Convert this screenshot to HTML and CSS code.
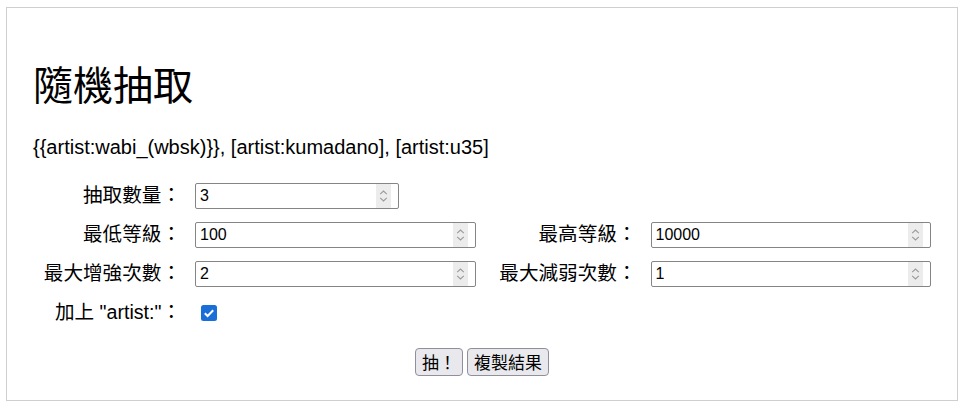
FILE: index.html
```html
<!DOCTYPE html>
<html lang="zh-Hant">
<head>
<meta charset="utf-8">
<title>隨機抽取</title>
<link rel="stylesheet" href="styles.css">
</head>
<body>
<main class="panel">
  <h1 class="title">隨機抽取</h1>
  <p class="result">{{artist:wabi_(wbsk)}}, [artist:kumadano], [artist:u35]</p>
  <form class="form">
    <label class="label">抽取數量：</label>
    <div class="cell"><div class="field field-short"><input class="num" type="text" value="3"><span class="spin"><svg width="9" height="14" viewBox="0 0 9 14"><path d="M1.2 5.2 L4.5 2 L7.8 5.2 M1.2 8.8 L4.5 12 L7.8 8.8" fill="none" stroke="#9a9a9a" stroke-width="1.1"/></svg></span></div></div>
    <span class="blank"></span><span class="blank"></span>

    <label class="label">最低等級：</label>
    <div class="cell"><div class="field"><input class="num" type="text" value="100"><span class="spin"><svg width="9" height="14" viewBox="0 0 9 14"><path d="M1.2 5.2 L4.5 2 L7.8 5.2 M1.2 8.8 L4.5 12 L7.8 8.8" fill="none" stroke="#9a9a9a" stroke-width="1.1"/></svg></span></div></div>
    <label class="label">最高等級：</label>
    <div class="cell"><div class="field"><input class="num" type="text" value="10000"><span class="spin"><svg width="9" height="14" viewBox="0 0 9 14"><path d="M1.2 5.2 L4.5 2 L7.8 5.2 M1.2 8.8 L4.5 12 L7.8 8.8" fill="none" stroke="#9a9a9a" stroke-width="1.1"/></svg></span></div></div>

    <label class="label">最大增強次數：</label>
    <div class="cell"><div class="field"><input class="num" type="text" value="2"><span class="spin"><svg width="9" height="14" viewBox="0 0 9 14"><path d="M1.2 5.2 L4.5 2 L7.8 5.2 M1.2 8.8 L4.5 12 L7.8 8.8" fill="none" stroke="#9a9a9a" stroke-width="1.1"/></svg></span></div></div>
    <label class="label">最大減弱次數：</label>
    <div class="cell"><div class="field"><input class="num" type="text" value="1"><span class="spin"><svg width="9" height="14" viewBox="0 0 9 14"><path d="M1.2 5.2 L4.5 2 L7.8 5.2 M1.2 8.8 L4.5 12 L7.8 8.8" fill="none" stroke="#9a9a9a" stroke-width="1.1"/></svg></span></div></div>

    <label class="label">加上 "artist:"：</label>
    <div class="cell"><span class="check"><svg width="16" height="16" viewBox="0 0 16 16"><rect x="0" y="0" width="16" height="16" rx="2.5" fill="#1a6ed8"/><path d="M3.8 8.2 L6.6 11 L12.2 5.2" fill="none" stroke="#fff" stroke-width="2"/></svg></span></div>
    <span class="blank"></span><span class="blank"></span>
  </form>
  <div class="actions">
    <button class="btn" type="button">抽！</button>
    <button class="btn" type="button">複製結果</button>
  </div>
</main>
</body>
</html>
```
FILE: styles.css
```css
html, body {
  margin: 0;
  padding: 0;
  background: #fff;
}
body {
  padding: 7px 7px 9px 6px;
  font-family: "Liberation Sans", "Noto Sans CJK TC", sans-serif;
  color: #000;
}
.panel {
  border: 1px solid #cfcfcf;
  padding: 26px 26px 24px 26px;
}
.title {
  margin: 23px 0 0 0;
  font-family: "Noto Sans CJK TC", serif;
  font-weight: normal;
  font-size: 40px;
  line-height: 52px;
}
.result {
  margin: 26px 0 0 0;
  font-size: 20px;
  line-height: 24px;
}
.form {
  margin-top: 24px;
  display: grid;
  grid-template-columns: 145px 1fr 141px 1fr;
  column-gap: 17px;
  row-gap: 14px;
  align-items: center;
}
.label {
  text-align: right;
  font-family: "Liberation Sans", "Noto Sans CJK TC", sans-serif;
  font-size: 19.6px;
  line-height: 25px;
  white-space: nowrap;
  margin-right: -3px;
}
.cell {
  display: flex;
  align-items: center;
  height: 25px;
}
.field {
  flex: 1 1 0;
  min-width: 0;
  display: flex;
  height: 26px;
  box-sizing: border-box;
  border: 1px solid #858585;
  border-radius: 2px;
  background: #fff;
}
.field-short {
  flex: 0 0 204px;
}
.num {
  flex: 1 1 0;
  width: 0;
  min-width: 0;
  border: 0;
  outline: 0;
  padding: 0 4px;
  font-family: "Liberation Sans", sans-serif;
  font-size: 16px;
  color: #000;
  background: transparent;
}
.spin {
  flex: 0 0 15px;
  margin-right: 7px;
  background: #ececec;
  display: flex;
  align-items: center;
  justify-content: center;
}
.check {
  display: flex;
  margin-left: 6px;
}
.actions {
  margin-top: 23px;
  display: flex;
  justify-content: center;
  gap: 4px;
}
.btn {
  font-family: "Noto Sans CJK TC", sans-serif;
  font-size: 17px;
  line-height: 24px;
  padding: 1px 6px 1px 6px;
  background: #e9e9ed;
  border: 1px solid #8f8f9d;
  border-radius: 4px;
  color: #000;
}
```
